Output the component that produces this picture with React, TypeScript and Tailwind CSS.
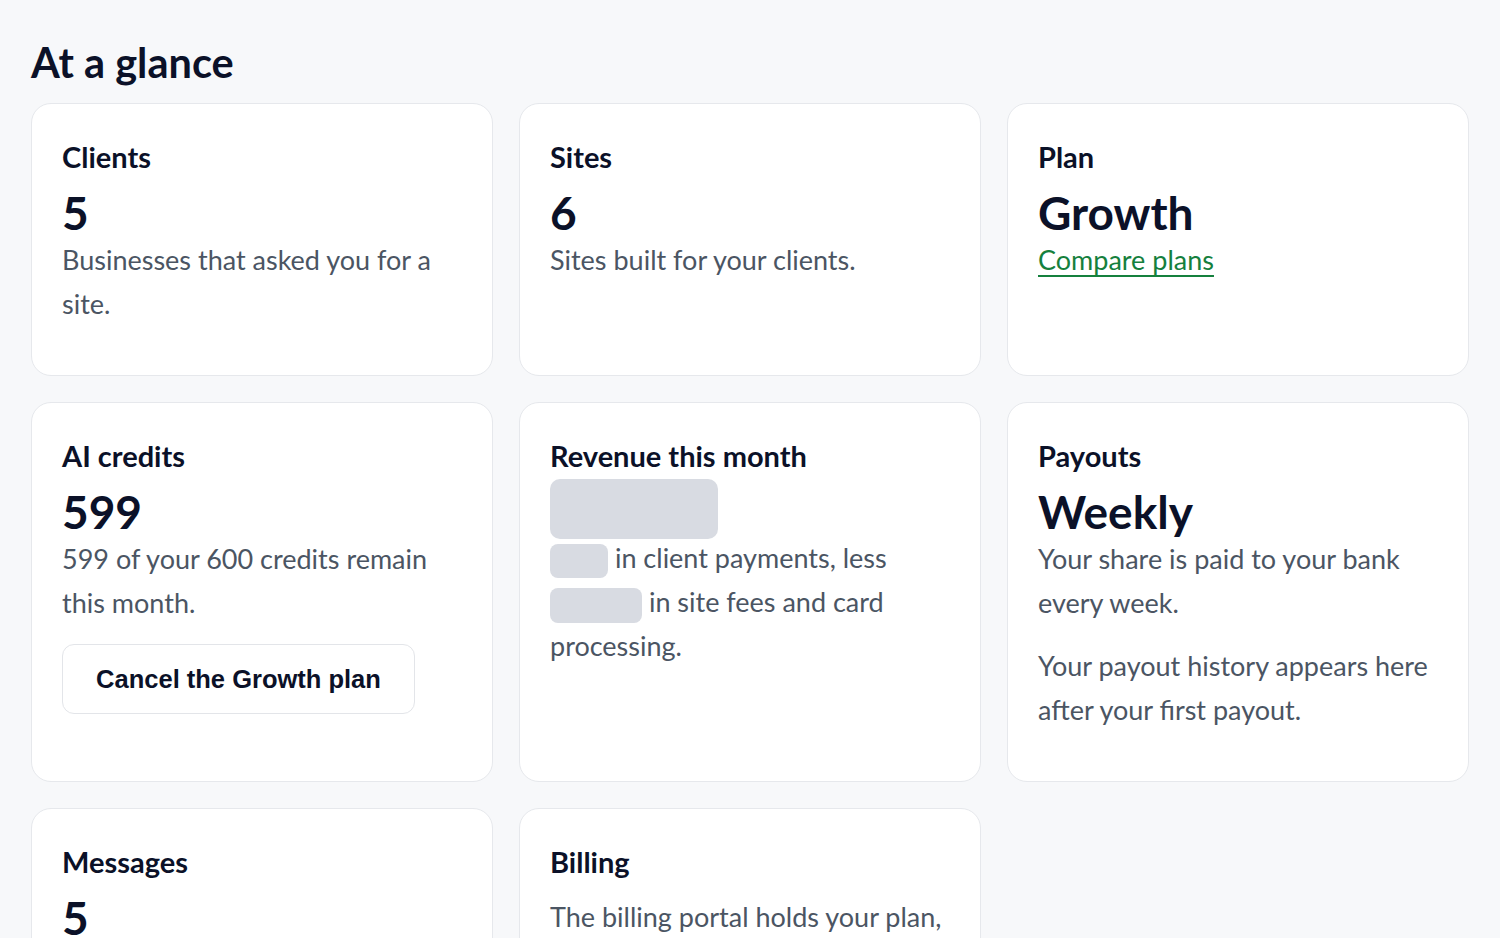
import React from 'react';

const body = "font-['Lato','Segoe_UI',sans-serif]";

function Card({ title, children }: { title: string; children?: React.ReactNode }) {
  return (
    <div className="rounded-[20px] border border-[#e6e8ec] bg-white p-[30px]">
      <h2 className="text-[29px] font-bold leading-[46px] text-[#0b1128]">{title}</h2>
      {children}
    </div>
  );
}

function Value({ children }: { children: React.ReactNode }) {
  return <div className="pt-[8px] text-[46px] font-bold leading-[50px] text-[#0b1128]">{children}</div>;
}

function Desc({ children, className = '' }: { children: React.ReactNode; className?: string }) {
  return <p className={`mb-[19px] text-[27px] leading-[44px] text-[#4b5563] ${className}`}>{children}</p>;
}

function Blank({ className }: { className: string }) {
  return <span className={`inline-block rounded-[8px] bg-[#d8dbe2] align-middle ${className}`} />;
}

export default function App() {
  return (
    <div className={`min-h-screen bg-[#f7f8fa] px-[31px] pt-[38px] pb-[40px] ${body}`}>
      <h1 className="mb-[17px] text-[41.5px] font-bold leading-[48px] text-[#0b1128]">At a glance</h1>

      <div className="grid grid-cols-3 gap-[26px]">
        <Card title="Clients">
          <Value>5</Value>
          <Desc>Businesses that asked you for a site.</Desc>
        </Card>

        <Card title="Sites">
          <Value>6</Value>
          <Desc>Sites built for your clients.</Desc>
        </Card>

        <Card title="Plan">
          <Value>Growth</Value>
          <Desc>
            <a href="#" className="text-[#15803d] underline underline-offset-[5px] decoration-[1.5px]">
              Compare plans
            </a>
          </Desc>
        </Card>

        <Card title="AI credits">
          <Value>599</Value>
          <Desc>599 of your 600 credits remain this month.</Desc>
          <button className="flex h-[70px] w-[353px] items-center justify-center rounded-[12px] border border-[#e3e5e9] bg-white font-['Liberation_Sans',Arial,sans-serif] text-[25.5px] font-bold text-[#0b1128]">
            Cancel the Growth plan
          </button>
        </Card>

        <Card title="Revenue this month">
          <div className="h-[60px] w-[168px] rounded-[10px] bg-[#d8dbe2]" />
          <Desc className="-mt-[3px]">
            <Blank className="h-[34px] w-[58px]" /> in client payments, less{' '}
            <Blank className="h-[35px] w-[92px]" /> in site fees and card processing.
          </Desc>
        </Card>

        <Card title="Payouts">
          <Value>Weekly</Value>
          <Desc>Your share is paid to your bank every week.</Desc>
          <Desc>Your payout history appears here after your first payout.</Desc>
        </Card>

        <Card title="Messages">
          <Value>5</Value>
          <Desc>Unread messages from your clients.</Desc>
        </Card>

        <Card title="Billing">
          <Desc className="mt-[10px]">
            The billing portal holds your plan, invoices and payment method.
          </Desc>
        </Card>
      </div>
    </div>
  );
}
